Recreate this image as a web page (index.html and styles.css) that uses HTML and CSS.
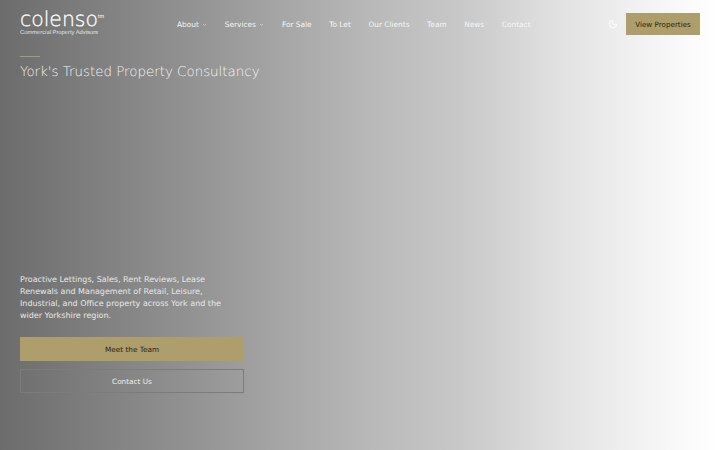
FILE: index.html
```html
<!DOCTYPE html>
<html>
  <head>
    <meta charset="utf-8" />
    <title>Colenso</title>
    <link rel="stylesheet" href="styles.css">
  </head>
  <body>
    <main class="hero">
      <header class="topbar">
        <a class="logo" href="#">
          <span class="logo-word">colenso<sup class="logo-tm">tm</sup></span>
          <span class="logo-sub">Commercial Property Advisors</span>
        </a>
        <nav class="nav">
          <a href="#">About <svg class="chev" viewBox="0 0 8 8"><path d="M1.5 3 4 5.500 6.500 3" /></svg></a>
          <a href="#">Services <svg class="chev" viewBox="0 0 8 8"><path d="M1.5 3 4 5.500 6.500 3" /></svg></a>
          <a href="#">For Sale</a>
          <a href="#">To Let</a>
          <a href="#">Our Clients</a>
          <a href="#">Team</a>
          <a href="#">News</a>
          <a href="#">Contact</a>
        </nav>
        <div class="actions">
          <svg class="moon" viewBox="0 0 24 24"><path d="M21 12.800A9 9 0 1 1 11.200 3a7 7 0 0 0 9.800 9.800z" /></svg>
          <a class="btn-top" href="#">View Properties</a>
        </div>
      </header>
      <section class="intro">
        <div class="rule"></div>
        <h1>York's Trusted Property Consultancy</h1>
      </section>
      <section class="lower">
        <p>Proactive Lettings, Sales, Rent Reviews, Lease Renewals and Management of Retail, Leisure, Industrial, and Office property across York and the wider Yorkshire region.</p>
        <a class="btn gold" href="#">Meet the Team</a>
        <a class="btn ghost" href="#">Contact Us</a>
      </section>
    </main>
  </body>
</html>
```

FILE: styles.css
```css
html,
body {
  margin: 0;
  height: 100%;
  background-color: white;
  font-family: "DejaVu Sans", sans-serif;
  text-rendering: geometricPrecision;
}
*,
*:before,
*:after {
  box-sizing: border-box;
}
a {
  text-decoration: none;
  color: inherit;
}
.hero {
  height: 450px;
  overflow: hidden;
  display: flex;
  flex-direction: column;
  color: white;
  background: linear-gradient(to right, #6c6c6c 0%, #909090 25%, #b8b8b8 51%, #c8c8c8 64%, #e2e2e2 78%, #f2f2f2 89%, #fbfbfb 96%, #ffffff 100%);
}
.topbar {
  height: 48px;
  padding: 0 20px;
  display: flex;
  align-items: center;
}
.logo {
  width: 157px;
  display: flex;
  flex-direction: column;
  margin-bottom: 1px;
}
.logo-word {
  font-weight: 200;
  font-size: 20.400px;
  line-height: 18px;
  white-space: nowrap;
  -webkit-text-stroke: 0.3px white;
}
.logo-tm {
  font-family: "Liberation Sans", sans-serif;
  font-size: 5.500px;
  line-height: 0;
  vertical-align: 8px;
  -webkit-text-stroke: 0;
}
.logo-sub {
  font-family: "Liberation Sans", sans-serif;
  font-size: 5.800px;
  line-height: 8px;
  margin-top: 1px;
  opacity: 0.8;
  white-space: nowrap;
}
.nav {
  display: flex;
  align-items: center;
  gap: 17.600px;
  font-size: 7.400px;
  color: #f6f6f6;
  white-space: nowrap;
}
.chev {
  width: 5px;
  height: 5px;
  margin-left: 1px;
  fill: none;
  stroke: #eee;
  stroke-width: 0.8;
}
.actions {
  margin-left: auto;
  display: flex;
  align-items: center;
  gap: 8px;
}
.moon {
  width: 10px;
  height: 10px;
  fill: none;
  stroke: white;
  stroke-width: 2;
}
.btn-top {
  width: 74px;
  height: 22px;
  display: flex;
  align-items: center;
  justify-content: center;
  background-color: #ad9e6c;
  color: #2c2410;
  font-size: 7.200px;
}
.intro {
  padding: 8px 20px 0;
}
.rule {
  width: 20px;
  height: 1px;
  background-color: #a39a78;
}
h1 {
  margin: 7px 0 0;
  font-weight: 200;
  font-size: 13.400px;
  line-height: 18px;
  color: #f4f4f4;
}
.lower {
  margin-top: auto;
  width: 264px;
  padding: 0 20px 57px;
  display: flex;
  flex-direction: column;
}
.lower p {
  margin: 0 0 15px;
  padding-right: 16px;
  font-size: 8px;
  line-height: 12px;
  color: #e8e8e8;
}
.btn {
  height: 24px;
  display: flex;
  align-items: center;
  justify-content: center;
  font-size: 7.300px;
}
.gold {
  background-color: #ad9e6c;
  color: #2c2410;
}
.ghost {
  margin-top: 8px;
  border: 1px solid #7c7c7c;
  color: #eee;
}
```
